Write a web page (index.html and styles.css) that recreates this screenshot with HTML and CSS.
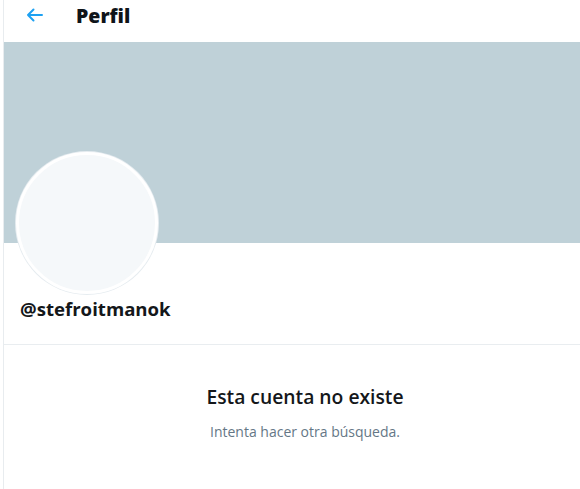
FILE: index.html
```html
<!DOCTYPE html>
<html lang="es">
<head>
<meta charset="utf-8">
<title>Perfil</title>
<link rel="stylesheet" href="styles.css">
</head>
<body>
<div class="page">
  <header class="topbar">
    <svg class="back" width="17" height="14" viewBox="0 0 17 14" aria-hidden="true">
      <path d="M16 7H2M7.5 1.5L2 7l5.5 5.5" fill="none" stroke="#1da1f2" stroke-width="2" stroke-linecap="round" stroke-linejoin="round"/>
    </svg>
    <h1 class="title">Perfil</h1>
  </header>
  <div class="banner"></div>
  <div class="avatar"></div>
  <div class="handle">@stefroitmanok</div>
  <div class="divider"></div>
  <section class="empty">
    <h2 class="empty-title">Esta cuenta no existe</h2>
    <p class="empty-sub">Intenta hacer otra búsqueda.</p>
  </section>
</div>
</body>
</html>
```
FILE: styles.css
```css
html, body {
  margin: 0;
  padding: 0;
  background: #fff;
}
body {
  font-family: "Open Sans", "Noto Sans", sans-serif;
  color: #14171a;
}
.page {
  margin-left: 3px;
  border-left: 1px solid #e8ecef;
  min-height: 489px;
}
.topbar {
  height: 42px;
  display: flex;
  align-items: center;
  padding-left: 22px;
  box-sizing: border-box;
}
.back {
  display: block;
  margin-top: -12px;
}
.title {
  margin: -10px 0 0 33px;
  font-size: 19.5px;
  font-weight: 800;
  line-height: 1;
  color: #0f1419;
}
.banner {
  height: 201px;
  background: #bfd1d8;
}
.avatar {
  width: 136px;
  height: 136px;
  margin: -91px 0 0 12px;
  border-radius: 50%;
  background: #f5f8fa;
  border: 3px solid #fff;
  box-shadow: 0 0 0 1px #e6ecf0;
}
.handle {
  margin: 3px 0 0 16px;
  font-size: 18.6px;
  font-weight: 700;
  line-height: 24px;
  color: #14171a;
}
.divider {
  margin-top: 23px;
  height: 1px;
  background: #e9edf0;
}
.empty {
  text-align: center;
  padding-top: 40px;
  padding-left: 26px;
}
.empty-title {
  margin: 0;
  font-size: 19.3px;
  font-weight: 600;
  line-height: 24px;
  color: #14171a;
}
.empty-sub {
  margin: 14px 0 0;
  font-size: 14px;
  line-height: 18px;
  color: #657786;
}
```
